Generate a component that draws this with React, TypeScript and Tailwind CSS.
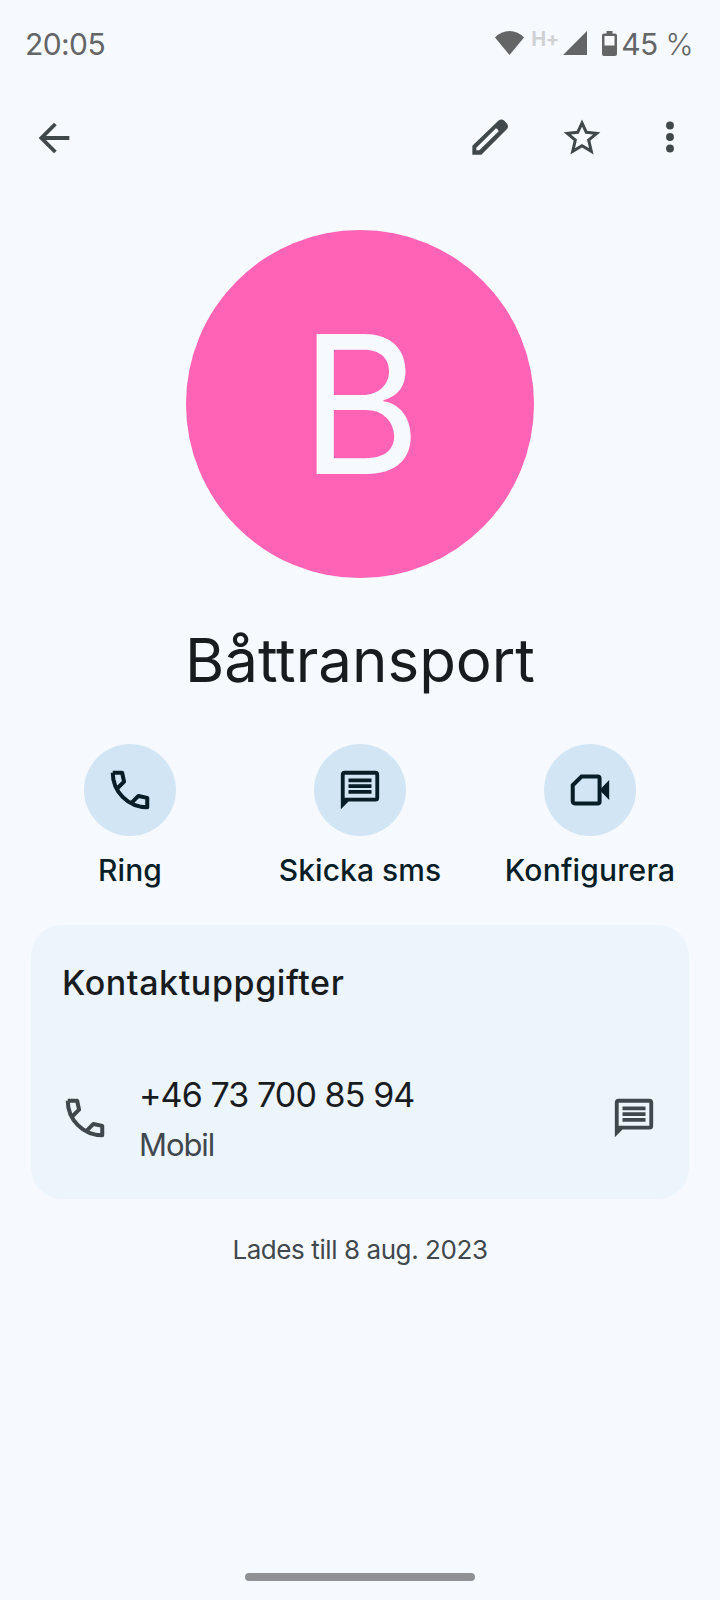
import React from 'react';
import clsx from 'clsx';

interface IconProps {
    className?: string;
}

const PhoneIcon: React.FC<IconProps> = ({ className }) => (
    <svg viewBox="0 0 24 24" fill="none" stroke="currentColor" strokeWidth="2.1" strokeLinejoin="round" className={clsx("w-[46px] h-[46px] shrink-0", className)}>
        <path d="M3 3A18 18 0 0 0 21 21V16.1L16.4 15.1L12.8 18.7M3 3H7.9L8.9 7.6L5.3 11.2" />
    </svg>
);

const MessageIcon: React.FC<IconProps> = ({ className }) => (
    <svg viewBox="0 0 24 24" fill="currentColor" className={clsx("w-[46px] h-[46px] shrink-0", className)}>
        <path d="M4 2h16a2 2 0 0 1 2 2v12a2 2 0 0 1-2 2H6l-4 4V4a2 2 0 0 1 2-2zm0 2v12h16V4z" fillRule="evenodd" />
        <path d="M6 6h12v2H6zM6 9h12v2H6zM6 12h12v2H6z" />
    </svg>
);

const VideoIcon: React.FC<IconProps> = ({ className }) => (
    <svg viewBox="0 0 24 24" className={clsx("w-[46px] h-[46px] shrink-0", className)}>
        <path d="M7.6 5H16a1 1 0 0 1 1 1v12a1 1 0 0 1-1 1H4a1 1 0 0 1-1-1V9.5z" fill="none" stroke="currentColor" strokeWidth="2.1" />
        <path d="M17 12l5-5.2v10.4z" fill="currentColor" />
    </svg>
);

const StatusBar = () => (
    <div className="h-[88px] flex items-center justify-between pl-[25px] pr-[27px] text-[#646567] text-[30px]">
        <span className="tracking-[-0.6px]">20:05</span>
        <div className="flex items-center">
            <svg viewBox="0 0 29 24" className="w-[29px] h-6 mb-[3px]" fill="currentColor">
                <path d="M14.5 24L0 6.5Q6 0 14.5 0T29 6.5z" />
            </svg>
            <span className="ml-[7px] mb-[11px] w-[29px] text-[20px] leading-none font-bold tracking-[-0.5px] text-[#cfd1d5]">H+</span>
            <svg viewBox="0 0 24 24" className="w-6 h-6 ml-[3px] mb-[3px]" fill="currentColor">
                <path d="M24 0v24H0z" />
            </svg>
            <svg viewBox="0 0 15 25" className="w-[15px] h-[25px] ml-[15px] mb-px" fill="currentColor">
                <path d="M4.5 0h6v2.5H13a2 2 0 0 1 2 2V23a2 2 0 0 1-2 2H2a2 2 0 0 1-2-2V4.5a2 2 0 0 1 2-2h2.5zM2.5 5v9.5h10V5z" fillRule="evenodd" />
            </svg>
            <span className="ml-1 tracking-[-0.6px]">45 <span className="font-light">%</span></span>
        </div>
    </div>
);

const AppBar = () => (
    <div className="h-[98px] flex items-center pl-[31px] pr-[27px] text-[#41484c]">
        <svg viewBox="0 0 24 24" className="w-[46px] h-[46px] mt-0.5" fill="currentColor">
            <path d="M20 11H7.83l5.59-5.59L12 4l-8 8 8 8 1.41-1.41L7.83 13H20z" />
        </svg>
        <svg viewBox="0 0 120 120" className="w-10 h-10 ml-auto" fill="currentColor" fillRule="evenodd">
            <path d="M7 113V86L85 11q9-7 18 0l8 9q6 8 0 16L34 113zM19 100h9L86 43q-1-6-8-9L19 92z" />
        </svg>
        <svg viewBox="0 0 120 120" className="w-10 h-10 ml-[52px] mb-[3px]" fill="none" stroke="currentColor" strokeWidth="9">
            <path d="M60 21L73 49L104 52L80 72L88 106L60 89L32 106L40 72L16 52L47 49z" />
        </svg>
        <svg viewBox="0 0 24 24" className="w-[46px] h-[46px] ml-[45px]" fill="currentColor">
            <circle cx="12" cy="6" r="2.05" />
            <circle cx="12" cy="12" r="2.05" />
            <circle cx="12" cy="18" r="2.05" />
        </svg>
    </div>
);

const actions = [
    { label: 'Ring', Icon: PhoneIcon, spacing: 'tracking-[0.1px]' },
    { label: 'Skicka sms', Icon: MessageIcon, spacing: 'tracking-[0.05px]' },
    { label: 'Konfigurera', Icon: VideoIcon, spacing: 'tracking-[0.2px]' },
];

export default function App() {
    return (
        <div className="w-[720px] h-[1600px] overflow-hidden flex flex-col bg-[#f6faff] text-[#181c1f] font-['Inter',sans-serif]">
            <StatusBar />
            <AppBar />

            {/* Contact */}
            <div className="mt-11 w-[348px] h-[348px] self-center rounded-full bg-[#ff63b6] text-[#f6faff] flex items-center justify-center">
                <span className="text-[192px] leading-none scale-x-[0.96] pl-0.5">B</span>
            </div>
            <h1 className="mt-[38px] h-[88px] leading-[88px] text-center text-[60px] font-[370]">Båttransport</h1>

            {/* Quick actions */}
            <div className="mt-10 px-[15px] grid grid-cols-3 text-[#071e28]">
                {actions.map(({ label, Icon, spacing }) => (
                    <button key={label} className="flex flex-col items-center">
                        <span className="w-[92px] h-[92px] rounded-full bg-[#d2e5f4] flex items-center justify-center">
                            <Icon />
                        </span>
                        <span className={clsx("mt-3.5 h-10 leading-10 text-[30px] font-medium whitespace-nowrap", spacing)}>{label}</span>
                    </button>
                ))}
            </div>

            {/* Contact details */}
            <div className="mt-[35px] mx-[31px] h-[274px] rounded-[31px] bg-[#ecf4fc] px-[31px]">
                <h2 className="pt-9 h-20 leading-[44px] text-[34px] font-medium tracking-[0.6px]">Kontaktuppgifter</h2>
                <div className="mt-[65px] flex items-center text-[#41484d]">
                    <PhoneIcon className="mb-1" />
                    <div className="ml-[31px] flex-1">
                        <div className="h-[50px] leading-[50px] text-[34px] font-[370] tracking-[-0.9px] text-[#181c1f]">+46 73 700 85 94</div>
                        <div className="h-[50px] leading-[50px] text-[31px] font-[370] tracking-[-1.1px]">Mobil</div>
                    </div>
                    <MessageIcon className="mb-1 mr-px" />
                </div>
            </div>

            <p className="mt-[30px] h-[41px] leading-[41px] text-center text-[26px] tracking-[-0.42px] text-[#41484d]">Lades till 8 aug. 2023</p>

            <div className="mt-auto mb-[19px] self-center w-[230px] h-2 rounded-full bg-[#8f9194]" />
        </div>
    );
}
